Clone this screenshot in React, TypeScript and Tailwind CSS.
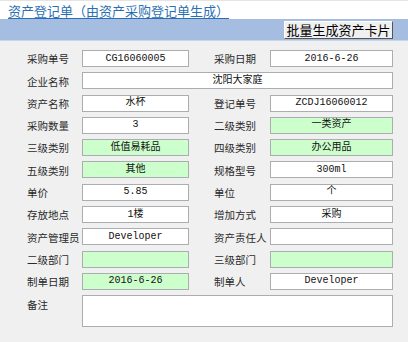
import React from 'react';

const cjk = "font-['Noto_Sans_CJK_SC',sans-serif]";
const mono = "font-['Liberation_Mono','Noto_Sans_CJK_SC',monospace]";

type BoxProps = { value?: string; green?: boolean; wide?: boolean; tall?: boolean };

function Box({ value = '', green, wide, tall }: BoxProps) {
  return (
    <div
      className={[
        'border border-[#acadb0] flex justify-center text-[10px] leading-none text-[#111] overflow-hidden',
        mono,
        green ? 'bg-[#ccffcc]' : 'bg-white',
        wide ? 'col-span-4' : '',
        tall ? 'h-[32px] items-start' : 'h-[17px] items-center',
      ].join(' ')}
    >
      {value}
    </div>
  );
}

function Label({ text, top }: { text: string; top?: boolean }) {
  return (
    <div
      className={[
        'text-[10.5px] leading-none text-[#2a2a2a] whitespace-nowrap flex',
        cjk,
        top ? 'items-start pt-[5px]' : 'items-center pt-[2px]',
      ].join(' ')}
    >
      {text}
    </div>
  );
}

type RowData = [string, string, boolean, string, string, boolean];

const topRow: RowData = ['采购单号', 'CG16060005', false, '采购日期', '2016-6-26', false];

const rows: RowData[] = [
  ['资产名称', '水杯', false, '登记单号', 'ZCDJ16060012', false],
  ['采购数量', '3', false, '二级类别', '一类资产', true],
  ['三级类别', '低值易耗品', true, '四级类别', '办公用品', true],
  ['五级类别', '其他', true, '规格型号', '300ml', false],
  ['单价', '5.85', false, '单位', '个', false],
  ['存放地点', '1楼', false, '增加方式', '采购', false],
  ['资产管理员', 'Developer', false, '资产责任人', '', false],
  ['二级部门', '', true, '三级部门', '', true],
  ['制单日期', '2016-6-26', true, '制单人', 'Developer', false],
];

function Row({ r }: { r: RowData }) {
  return (
    <>
      <Label text={r[0]} />
      <Box value={r[1]} green={r[2]} />
      <div />
      <Label text={r[3]} />
      <Box value={r[4]} green={r[5]} />
    </>
  );
}

export default function App() {
  return (
    <div className="w-[408px] h-[342px] bg-[#f0f0f0] flex flex-col overflow-hidden">
      <div className="h-[19px] bg-white border-t border-[#e4e4e4] flex items-center pl-[8px]">
        <span className={`text-[13px] leading-none text-[#2b6fb3] underline underline-offset-[2px] ${cjk}`}>
          资产登记单（由资产采购登记单生成）
        </span>
      </div>
      <div className="h-[22px] bg-[#a4bde0] flex items-center justify-end pr-[15px] border-b border-[#c9d6ea]">
        <button
          className={`h-[18px] w-[109px] bg-[#f0f0f0] border border-t-white border-l-white border-r-[#555] border-b-[#555] text-[13px] leading-none text-black flex items-center justify-center ${cjk}`}
        >
          批量生成资产卡片
        </button>
      </div>
      <div className="grid grid-cols-[55px_107px_25px_56px_123px] gap-y-[5.3px] pl-[27px] pt-[9px]">
        <Row r={topRow} />
        <Label text="企业名称" />
        <Box value="沈阳大家庭" wide />
        {rows.map((r) => (
          <Row key={r[0]} r={r} />
        ))}
        <Label text="备注" top />
        <Box wide tall />
      </div>
    </div>
  );
}
